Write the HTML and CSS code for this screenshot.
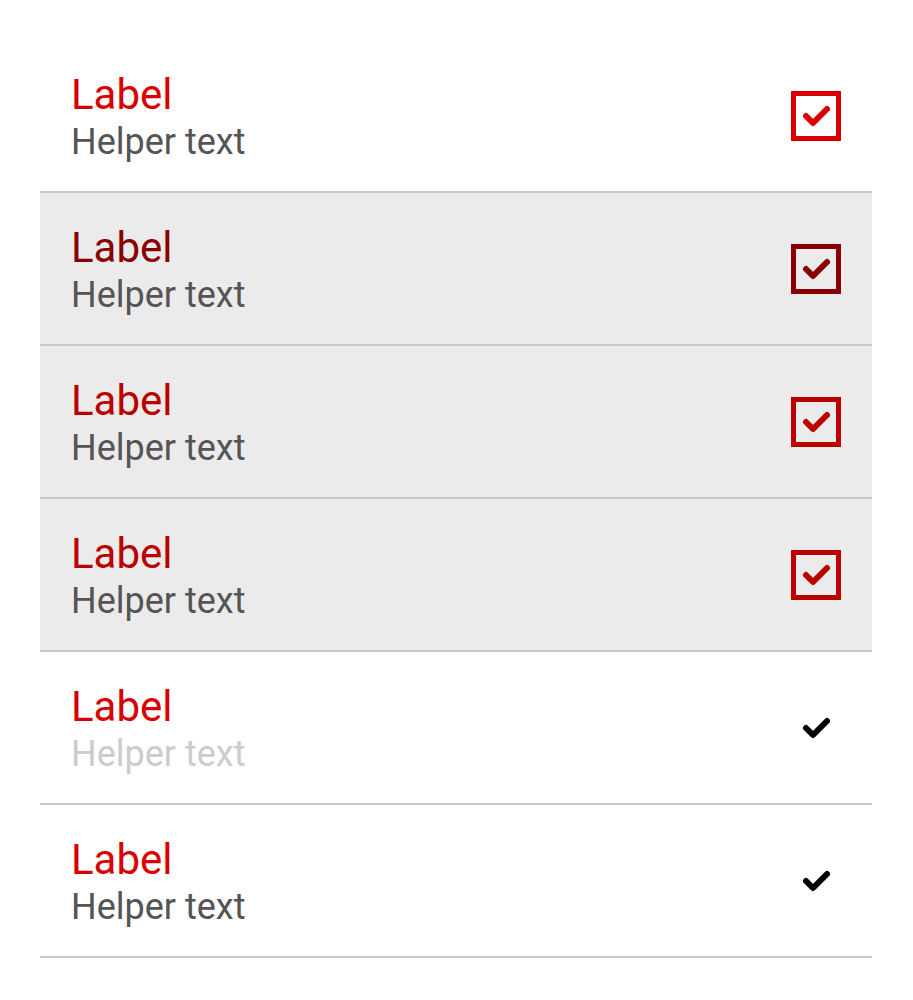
FILE: index.html
```html
<!DOCTYPE html>
<html>
<head>
<meta charset="utf-8">
<link rel="stylesheet" href="styles.css">
</head>
<body>
<ul class="list">
  <li class="item">
    <div class="text"><div class="label">Label</div><div class="helper">Helper text</div></div>
    <span class="box"><svg viewBox="0 0 40 40" class="check"><polyline points="10,20 17,27 31,13"/></svg></span>
  </li>
  <li class="item hover pressed">
    <div class="text"><div class="label">Label</div><div class="helper">Helper text</div></div>
    <span class="box"><svg viewBox="0 0 40 40" class="check"><polyline points="10,20 17,27 31,13"/></svg></span>
  </li>
  <li class="item hover">
    <div class="text"><div class="label">Label</div><div class="helper">Helper text</div></div>
    <span class="box"><svg viewBox="0 0 40 40" class="check"><polyline points="10,20 17,27 31,13"/></svg></span>
  </li>
  <li class="item hover">
    <div class="text"><div class="label">Label</div><div class="helper">Helper text</div></div>
    <span class="box"><svg viewBox="0 0 40 40" class="check"><polyline points="10,20 17,27 31,13"/></svg></span>
  </li>
  <li class="item plain">
    <div class="text"><div class="label">Label</div><div class="helper disabled">Helper text</div></div>
    <span class="box bare"><svg viewBox="0 0 40 40" class="check"><polyline points="10,20 17,27 31,13"/></svg></span>
  </li>
  <li class="item plain">
    <div class="text"><div class="label">Label</div><div class="helper">Helper text</div></div>
    <span class="box bare"><svg viewBox="0 0 40 40" class="check"><polyline points="10,20 17,27 31,13"/></svg></span>
  </li>
</ul>
</body>
</html>
```

FILE: styles.css
```css
html, body {
  margin: 0;
  padding: 0;
  background: #ffffff;
}
body {
  padding: 40px 41px 0 40px;
  font-family: Roboto, "Noto Sans", sans-serif;
}
.list {
  list-style: none;
  margin: 0;
  padding: 0;
}
.item {
  height: 151px;
  border-bottom: 2px solid #c8c8c8;
  display: flex;
  align-items: center;
  justify-content: space-between;
  padding: 0 30px 0 31px;
  color: #da0000;
}
.item.hover {
  background: #ebebeb;
  color: #bb0000;
}
.item.hover.pressed {
  color: #8a0000;
}
.text {
  display: flex;
  flex-direction: column;
  padding-top: 5px;
}
.label {
  font-size: 42px;
  line-height: 44px;
  color: inherit;
}
.helper {
  margin-top: 3px;
  font-size: 36px;
  line-height: 44px;
  color: #555555;
}
.helper.disabled {
  color: #cccccc;
}
.box {
  width: 50px;
  height: 50px;
  box-sizing: border-box;
  border: 5px solid currentColor;
  display: flex;
  align-items: center;
  justify-content: center;
  margin-right: 1px;
}
.box.bare {
  border-color: transparent;
  color: #000000;
}
.check {
  width: 40px;
  height: 40px;
  flex: none;
}
.check polyline {
  fill: none;
  stroke: currentColor;
  stroke-width: 6;
  stroke-linecap: round;
  stroke-linejoin: round;
}
```
